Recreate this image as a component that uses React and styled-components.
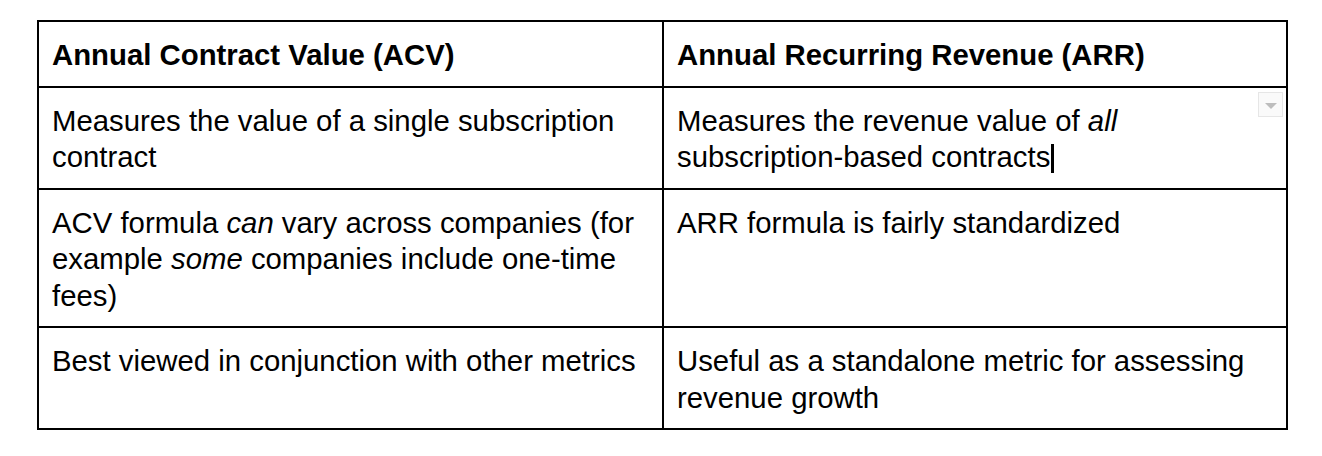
import React from "react";
import styled, { createGlobalStyle } from "styled-components";

const Global = createGlobalStyle`
  html, body { margin: 0; padding: 0; background: #fff; }
  body { font-family: "Liberation Sans", Arial, sans-serif; color: #000; }
`;

const Page = styled.div`
  padding: 20px 0 0 37px;
`;

const Table = styled.table`
  border-collapse: collapse;
  table-layout: fixed;
  width: 1249px;
`;

const Cell = styled.td`
  position: relative;
  border: 2px solid #000;
  padding: 15px 13px 12px 13px;
  vertical-align: top;
  font-size: 29.33px;
  line-height: 36.5px;
  font-weight: ${(p) => (p.$head ? 700 : 400)};
`;

const Caret = styled.span`
  display: inline-block;
  width: 3px;
  height: 29px;
  background: #000;
  vertical-align: -6px;
  margin-left: 1px;
`;

const DropButton = styled.div`
  position: absolute;
  top: 4px;
  right: 3px;
  width: 25px;
  height: 25px;
  border: 1px solid #e6e6e6;
  background: #fafafa;
  display: flex;
  align-items: flex-start;
  justify-content: center;
  padding-top: 10px;
  box-sizing: border-box;
`;

const Triangle = styled.div`
  width: 0;
  height: 0;
  border-left: 6px solid transparent;
  border-right: 6px solid transparent;
  border-top: 6px solid #bdbdbd;
`;

export default function App() {
  return (
    <>
      <Global />
      <Page>
        <Table>
          <colgroup>
            <col style={{ width: 625 }} />
            <col style={{ width: 624 }} />
          </colgroup>
          <tbody>
            <tr>
              <Cell $head>Annual Contract Value (ACV)</Cell>
              <Cell $head>Annual Recurring Revenue (ARR)</Cell>
            </tr>
            <tr>
              <Cell>Measures the value of a single subscription contract</Cell>
              <Cell>
                Measures the revenue value of <i>all</i> subscription-based contracts
                <Caret />
                <DropButton>
                  <Triangle />
                </DropButton>
              </Cell>
            </tr>
            <tr>
              <Cell>
                ACV formula <i>can</i> vary across companies (for example <i>some</i> companies include one-time fees)
              </Cell>
              <Cell>ARR formula is fairly standardized</Cell>
            </tr>
            <tr>
              <Cell>Best viewed in conjunction with other metrics</Cell>
              <Cell>Useful as a standalone metric for assessing revenue growth</Cell>
            </tr>
          </tbody>
        </Table>
      </Page>
    </>
  );
}
